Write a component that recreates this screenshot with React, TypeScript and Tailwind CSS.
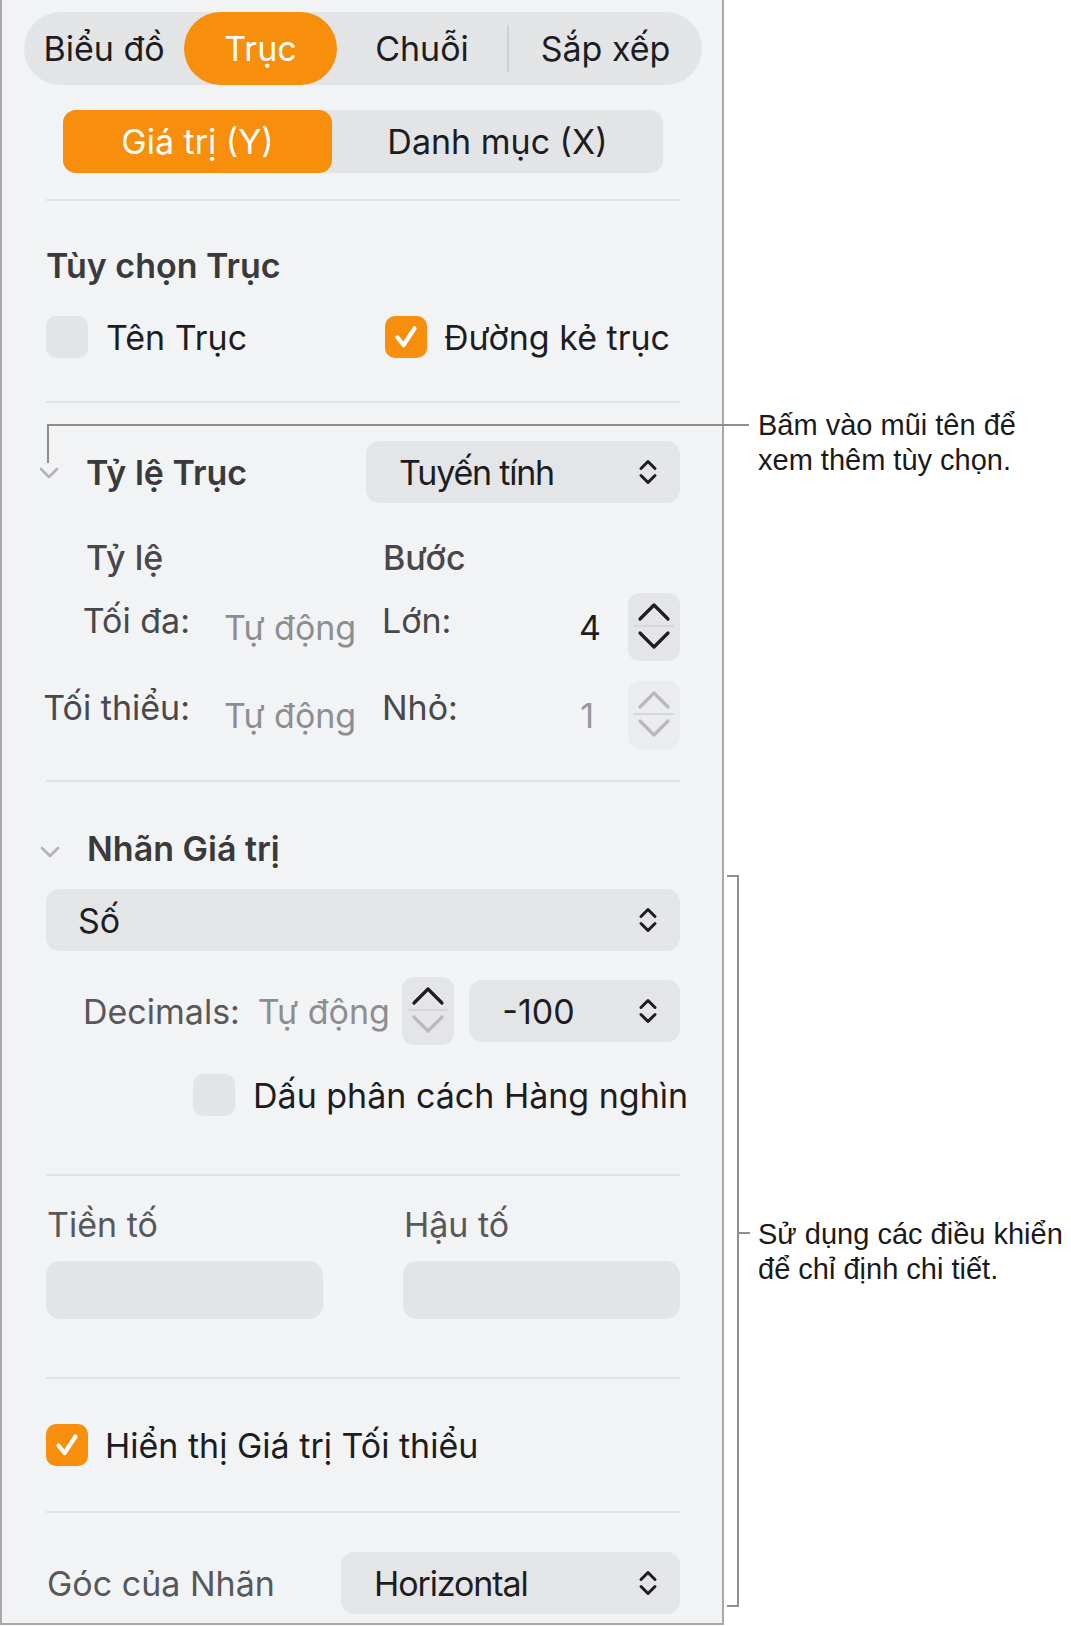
import React from "react";

const UI = "font-['Inter','Noto_Sans',sans-serif]";

function UpDown({ color = "#1d1d1f" }: { color?: string }) {
  return (
    <svg width="22" height="28" viewBox="0 0 22 28" className="shrink-0">
      <path
        d="M4 10.5 L11 3.5 L18 10.5 M4 17.5 L11 24.5 L18 17.5"
        stroke={color}
        strokeWidth="3"
        fill="none"
        strokeLinecap="round"
        strokeLinejoin="round"
      />
    </svg>
  );
}

function Popup({
  label,
  className = "",
  labelClass = "",
}: {
  label: string;
  className?: string;
  labelClass?: string;
}) {
  return (
    <div
      className={`h-[62px] rounded-[13px] bg-[#e4e5e7] flex items-center justify-between pl-[33px] pr-[21px] text-[34px] text-[#1d1d1f] ${className}`}
    >
      <span className={labelClass}>{label}</span>
      <UpDown />
    </div>
  );
}

function Stepper({ disabled = false, downGray = false }: { disabled?: boolean; downGray?: boolean }) {
  const up = disabled ? "#b9b9bb" : "#1d1d1f";
  const down = disabled || downGray ? "#b9b9bb" : "#1d1d1f";
  return (
    <div
      className={`w-[52px] h-[68px] rounded-[12px] flex flex-col items-center shrink-0 ${
        disabled ? "bg-[#ebecee]" : "bg-[#e4e5e7]"
      }`}
    >
      <svg width="36" height="30" viewBox="0 0 36 30" className="mt-[2px]">
        <path d="M4 24 L18 10 L32 24" stroke={up} strokeWidth="3.2" fill="none" strokeLinecap="round" strokeLinejoin="round" />
      </svg>
      <div className="w-[40px] h-[2px] bg-[#d6d7d9]" />
      <svg width="36" height="30" viewBox="0 0 36 30">
        <path d="M4 6 L18 20 L32 6" stroke={down} strokeWidth="3.2" fill="none" strokeLinecap="round" strokeLinejoin="round" />
      </svg>
    </div>
  );
}

function Check({ checked }: { checked: boolean }) {
  return checked ? (
    <div className="w-[42px] h-[42px] rounded-[10px] bg-[#f78e0c] flex items-center justify-center shrink-0">
      <svg width="30" height="30" viewBox="0 0 30 30">
        <path d="M6.5 15.5 L12.5 23 L23.5 6.5" stroke="#ffffff" strokeWidth="4.2" fill="none" strokeLinecap="round" strokeLinejoin="round" />
      </svg>
    </div>
  ) : (
    <div className="w-[42px] h-[42px] rounded-[10px] bg-[#e3e4e6] shrink-0" />
  );
}

function Disclosure() {
  return (
    <svg width="22" height="14" viewBox="0 0 22 14" className="shrink-0">
      <path d="M3 3 L11 11 L19 3" stroke="#b3b3b5" strokeWidth="2.6" fill="none" strokeLinecap="round" strokeLinejoin="round" />
    </svg>
  );
}

function Sep({ className = "" }: { className?: string }) {
  return <div className={`h-[2px] bg-[#e1e2e4] ${className}`} />;
}

export default function App() {
  return (
    <div className={`relative w-[1071px] h-[1626px] bg-white overflow-hidden ${UI}`}>
      <div className="flex">
        {/* Panel */}
        <div className="w-[724px] h-[1625px] bg-[#f2f3f5] border-l-2 border-r-2 border-b-2 border-[#a8a8aa] pt-[12px]">
          {/* Top tab bar */}
          <div className="ml-[22px] w-[678px] h-[73px] rounded-full bg-[#e3e4e6] flex items-center text-[34px] text-[#1d1d1f]">
            <div className="w-[160px] text-center">Biểu đồ</div>
            <div className="w-[153px] h-[73px] rounded-full bg-[#f78e0c] text-white flex items-center justify-center">
              Trục
            </div>
            <div className="w-[170px] text-center">Chuỗi</div>
            <div className="w-[2px] h-[47px] bg-[#cfd0d2]" />
            <div className="flex-1 text-center">Sắp xếp</div>
          </div>

          <div className="pl-[44px] pr-[42px]">
            {/* Sub segmented */}
            <div className="mt-[25px] ml-[17px] w-[600px] h-[63px] rounded-[13px] bg-[#e3e4e6] flex text-[34px]">
              <div className="w-[269px] h-full rounded-[13px] bg-[#f78e0c] text-white flex items-center justify-center">
                Giá trị (Y)
              </div>
              <div className="flex-1 flex items-center justify-center text-[#1d1d1f]">Danh mục (X)</div>
            </div>

            <Sep className="mt-[26px]" />

            {/* Tùy chọn Trục */}
            <div className="mt-[44px] h-[40px] flex items-center text-[34px] font-semibold text-[#3a3a3c]">
              Tùy chọn Trục
            </div>
            <div className="mt-[31px] h-[42px] flex items-center text-[34px] text-[#1d1d1f]">
              <div className="w-[339px] flex items-center gap-[18px]">
                <Check checked={false} />
                <span>Tên Trục</span>
              </div>
              <div className="flex items-center gap-[17px]">
                <Check checked={true} />
                <span className="whitespace-nowrap">Đường kẻ trục</span>
              </div>
            </div>

            <Sep className="mt-[43px]" />

            {/* Tỷ lệ Trục */}
            <div className="mt-[38px] h-[62px] flex items-center">
              <div className="-ml-[8px] mt-[2px]">
                <Disclosure />
              </div>
              <span className="ml-[26px] text-[34px] font-semibold text-[#3a3a3c]">Tỷ lệ Trục</span>
              <Popup label="Tuyến tính" labelClass="tracking-[-1.2px]" className="ml-auto w-[314px]" />
            </div>

            <div className="mt-[34px] h-[40px] flex items-center text-[34px] font-medium text-[#48484a]">
              <span className="ml-[40px] w-[297px]">Tỷ lệ</span>
              <span>Bước</span>
            </div>

            <div className="mt-[16px] h-[68px] flex items-center text-[34px]">
              <div className="w-[144px] text-right text-[#48484a] mb-[14px] whitespace-nowrap">Tối đa:</div>
              <div className="ml-[34px] w-[158px] text-[#8e8e90] whitespace-nowrap">Tự động</div>
              <div className="w-[116px] text-[#48484a] mb-[14px]">Lớn:</div>
              <div className="w-[119px] text-right pr-[16px] text-[#1d1d1f]">4</div>
              <div className="ml-[11px]">
                <Stepper />
              </div>
            </div>

            <div className="mt-[20px] h-[68px] flex items-center text-[34px]">
              <div className="w-[144px] flex justify-end text-[#48484a] mb-[16px] whitespace-nowrap">
                <span>Tối thiểu:</span>
              </div>
              <div className="ml-[34px] w-[158px] text-[#8e8e90] whitespace-nowrap">Tự động</div>
              <div className="w-[116px] text-[#48484a] mb-[16px]">Nhỏ:</div>
              <div className="w-[119px] text-right pr-[23px] text-[#98989a]">1</div>
              <div className="ml-[11px]">
                <Stepper disabled />
              </div>
            </div>

            <Sep className="mt-[31px]" />

            {/* Nhãn Giá trị */}
            <div className="mt-[46px] h-[40px] flex items-center">
              <div className="-ml-[7px] mt-[8px]">
                <Disclosure />
              </div>
              <span className="ml-[26px] text-[34px] font-semibold text-[#3a3a3c]">Nhãn Giá trị</span>
            </div>

            <Popup label="Số" className="mt-[21px] w-full !pl-[32px]" />

            <div className="mt-[26px] h-[68px] flex items-center text-[34px]">
              <div className="ml-[37px] w-[175px] text-[#58585a]">Decimals:</div>
              <div className="w-[145px] text-[#8e8e90] whitespace-nowrap">Tự động</div>
              <Stepper downGray />
              <Popup label="-100" className="ml-[15px] w-[211px]" />
            </div>

            <div className="mt-[29px] h-[42px] flex items-center text-[34px] text-[#1d1d1f]">
              <div className="ml-[147px]">
                <Check checked={false} />
              </div>
              <span className="ml-[18px] whitespace-nowrap">Dấu phân cách Hàng nghìn</span>
            </div>

            <Sep className="mt-[58px]" />

            {/* Tiền tố / Hậu tố */}
            <div className="mt-[28px] h-[40px] flex items-center text-[34px] text-[#58585a]">
              <span className="ml-[1px] w-[357px]">Tiền tố</span>
              <span>Hậu tố</span>
            </div>
            <div className="mt-[17px] flex justify-between">
              <div className="w-[277px] h-[58px] rounded-[14px] bg-[#e3e4e6]" />
              <div className="w-[277px] h-[58px] rounded-[14px] bg-[#e3e4e6]" />
            </div>

            <Sep className="mt-[58px]" />

            <div className="mt-[45px] h-[42px] flex items-center gap-[17px] text-[34px] text-[#1d1d1f]">
              <Check checked={true} />
              <span>Hiển thị Giá trị Tối thiểu</span>
            </div>

            <Sep className="mt-[45px]" />

            <div className="mt-[39px] h-[62px] flex items-center">
              <span className="ml-[1px] text-[34px] text-[#58585a]">Góc của Nhãn</span>
              <Popup label="Horizontal" labelClass="tracking-[-1.1px]" className="ml-auto w-[339px]" />
            </div>
          </div>
        </div>

        {/* Annotation column */}
        <div className="relative flex-1 h-[1626px] font-['Liberation_Sans',Arial,sans-serif] text-[29px] leading-[35px] text-[#1a1a1a]">
          <div className="absolute left-[34px] top-[408px] whitespace-nowrap">
            <div>Bấm vào mũi tên để</div>
            <div>xem thêm tùy chọn.</div>
          </div>
          <div className="absolute left-[34px] top-[1217px] whitespace-nowrap">
            <div>Sử dụng các điều khiển</div>
            <div>để chỉ định chi tiết.</div>
          </div>
        </div>
      </div>

      {/* Callout lines */}
      <div className="absolute left-[47px] top-[424px] w-[702px] h-[2px] bg-[#8e8e8e]" />
      <div className="absolute left-[47px] top-[424px] w-[2px] h-[39px] bg-[#8e8e8e]" />

      <div className="absolute left-[737px] top-[875px] w-[2px] h-[732px] bg-[#8e8e8e]" />
      <div className="absolute left-[727px] top-[875px] w-[12px] h-[2px] bg-[#8e8e8e]" />
      <div className="absolute left-[727px] top-[1605px] w-[12px] h-[2px] bg-[#8e8e8e]" />
      <div className="absolute left-[737px] top-[1232px] w-[13px] h-[2px] bg-[#8e8e8e]" />
    </div>
  );
}
